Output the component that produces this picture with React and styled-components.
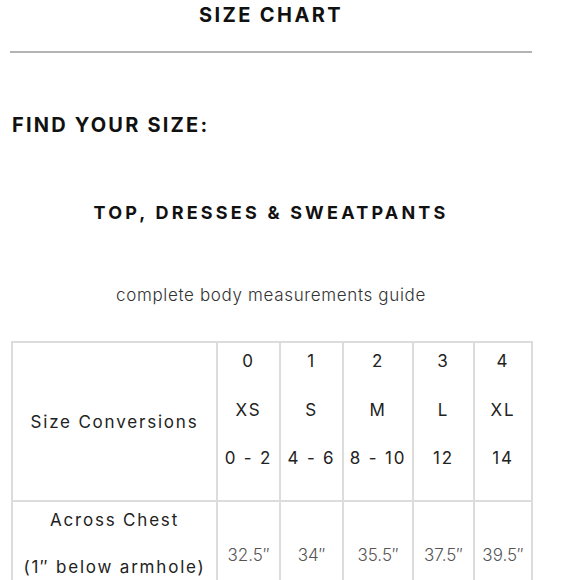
import styled, { createGlobalStyle } from "styled-components"

const GlobalStyle = createGlobalStyle`
  body {
    margin: 0;
    background: #ffffff;
    font-family: Inter, "Liberation Sans", sans-serif;
    color: #111111;
  }
`

const Page = styled.div`
  width: 522px;
  margin-left: 10px;
`

const Title = styled.h1`
  margin: 0;
  font-size: 20px;
  line-height: 30px;
  font-weight: 700;
  letter-spacing: 2.4px;
  text-align: center;
`

const Rule = styled.hr`
  margin: 21px 0 0;
  border: 0;
  height: 2px;
  background: #b4b4b4;
`

const SectionLabel = styled.h2`
  margin: 57px 0 0 2px;
  font-size: 20px;
  line-height: 30px;
  font-weight: 700;
  letter-spacing: 2.2px;
`

const Category = styled.h3`
  margin: 58px 0 0;
  font-size: 18px;
  line-height: 30px;
  font-weight: 700;
  letter-spacing: 3.2px;
  text-align: center;
`

const Guide = styled.p`
  margin: 52px 0 0;
  font-size: 17px;
  line-height: 30px;
  font-weight: 300;
  color: #333333;
  letter-spacing: 0.65px;
  text-align: center;
`

const Table = styled.table`
  margin: 31px 0 0 1px;
  width: 522px;
  table-layout: fixed;
  border-collapse: separate;
  border-spacing: 0;
  border-top: 2px solid #dcdcdc;
  border-left: 2px solid #dcdcdc;
`

const Col = styled.col`
  width: ${props => props.$w}px;
`

const Cell = styled.td`
  border-right: 2px solid #dcdcdc;
  border-bottom: 2px solid #dcdcdc;
  padding: 0;
  text-align: center;
  vertical-align: middle;
  font-size: 17px;
  color: ${props => props.$value ? '#555555' : '#222222'};
  font-weight: ${props => props.$value ? 300 : 400};
  letter-spacing: ${props => props.$value ? '0' : '1.8px'};
  white-space: nowrap;
`

const Lines = styled.div`
  display: flex;
  flex-direction: column;
  gap: ${props => props.$gap}px;
  padding: 8px 0 32px;
  line-height: 20px;
`

const sizes = [
  { num: "0", letter: "XS", us: "0 - 2", chest: "32.5″" },
  { num: "1", letter: "S", us: "4 - 6", chest: "34″" },
  { num: "2", letter: "M", us: "8 - 10", chest: "35.5″" },
  { num: "3", letter: "L", us: "12", chest: "37.5″" },
  { num: "4", letter: "XL", us: "14", chest: "39.5″" },
]

const colWidths = [205, 63, 63, 70, 61, 58]

const App = () => {
  return (
    <Page>
      <GlobalStyle />
      <Title>SIZE CHART</Title>
      <Rule />
      <SectionLabel>FIND YOUR SIZE:</SectionLabel>
      <Category>TOP, DRESSES &amp; SWEATPANTS</Category>
      <Guide>complete body measurements guide</Guide>

      <Table>
        <colgroup>
          {colWidths.map((w, i) => (
            <Col key={i} $w={w} />
          ))}
        </colgroup>
        <tbody>
          <tr>
            <Cell>Size Conversions</Cell>
            {sizes.map((s) => (
              <Cell key={s.num}>
                <Lines $gap={28.5}>
                  <span>{s.num}</span>
                  <span>{s.letter}</span>
                  <span>{s.us}</span>
                </Lines>
              </Cell>
            ))}
          </tr>
          <tr>
            <Cell>
              <Lines $gap={26.5}>
                <span>Across Chest</span>
                <span>(1″ below armhole)</span>
              </Lines>
            </Cell>
            {sizes.map((s) => (
              <Cell key={s.num} $value>{s.chest}</Cell>
            ))}
          </tr>
        </tbody>
      </Table>
    </Page>
  )
}

export default App
